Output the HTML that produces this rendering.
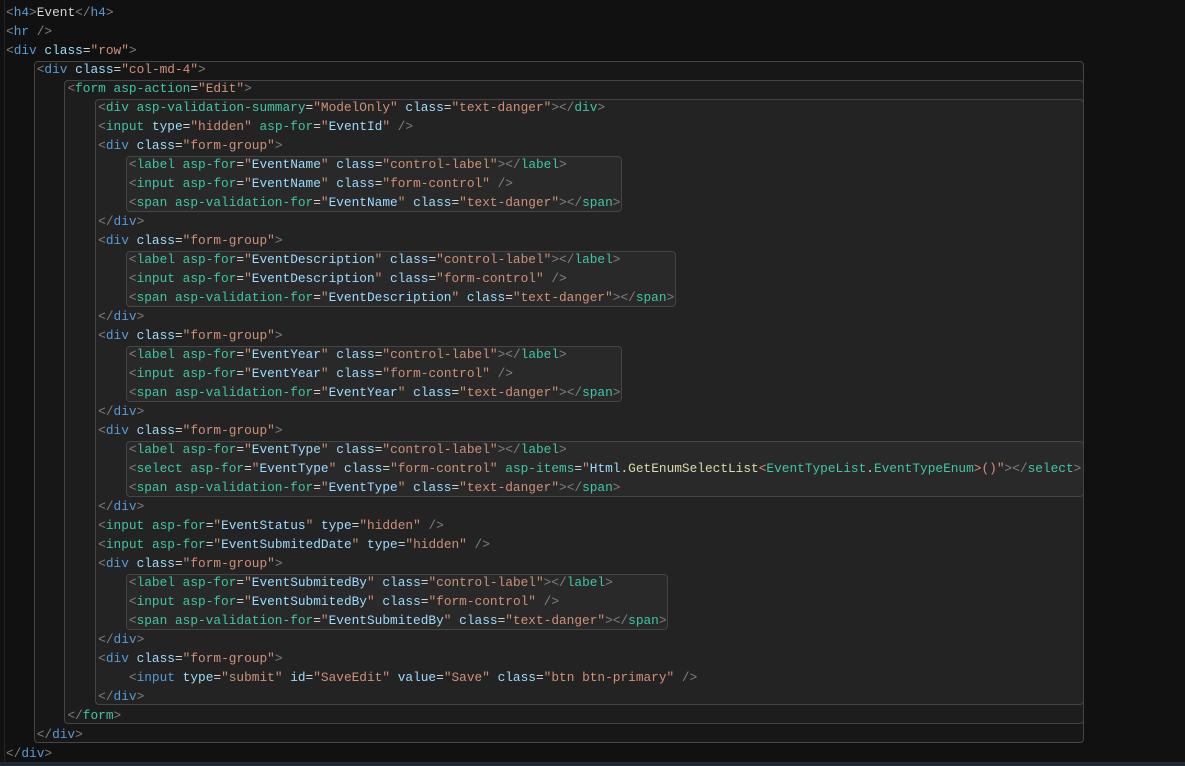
<!DOCTYPE html>
<html><head><meta charset="utf-8"><style>
html,body{margin:0;padding:0;}
body{width:1185px;height:766px;background:#111111;position:relative;overflow:hidden;font-family:"Liberation Mono",monospace;font-size:12.8px;}
.bx{position:absolute;border:1px solid #454545;border-radius:4px;background:rgba(255,255,255,0.028);box-sizing:border-box;}
.l{position:absolute;left:6px;height:19px;line-height:19px;white-space:pre;color:#d4d4d4;margin-top:1px;}
.d{color:#808080}.t{color:#569cd6}.a{color:#9cdcfe}.s{color:#ce9178}.h{color:#3fc6a4}.v{color:#9cdcfe}.f{color:#dcdcaa}
.gut{position:absolute;left:4px;top:0;width:1px;height:762px;background:#252525}
.bot{position:absolute;left:0;top:762px;width:1185px;height:4px;background:#1d2a33}
</style></head><body>
<div class="gut"></div>
<div class="bx" style="left:34px;top:61px;width:1050px;height:682px"></div>
<div class="bx" style="left:64px;top:80px;width:1020px;height:644px"></div>
<div class="bx" style="left:95px;top:99px;width:989px;height:606px"></div>
<div class="bx" style="left:126px;top:156px;width:496px;height:56px"></div>
<div class="bx" style="left:126px;top:251px;width:550px;height:56px"></div>
<div class="bx" style="left:126px;top:346px;width:496px;height:56px"></div>
<div class="bx" style="left:126px;top:441px;width:958px;height:56px"></div>
<div class="bx" style="left:126px;top:574px;width:542px;height:56px"></div>
<div class="bot"></div>

<div class="l" style="top:2px"><span class="d">&lt;</span><span class="t">h4</span><span class="d">&gt;</span>Event<span class="d">&lt;/</span><span class="t">h4</span><span class="d">&gt;</span></div>
<div class="l" style="top:21px"><span class="d">&lt;</span><span class="t">hr</span> <span class="d">/&gt;</span></div>
<div class="l" style="top:40px"><span class="d">&lt;</span><span class="t">div</span> <span class="a">class</span>=<span class="s">"row"</span><span class="d">&gt;</span></div>
<div class="l" style="top:59px">    <span class="d">&lt;</span><span class="t">div</span> <span class="a">class</span>=<span class="s">"col-md-4"</span><span class="d">&gt;</span></div>
<div class="l" style="top:78px">        <span class="d">&lt;</span><span class="h">form</span> <span class="h">asp-action</span>=<span class="s">"Edit"</span><span class="d">&gt;</span></div>
<div class="l" style="top:97px">            <span class="d">&lt;</span><span class="h">div</span> <span class="h">asp-validation-summary</span>=<span class="s">"ModelOnly"</span> <span class="a">class</span>=<span class="s">"text-danger"</span><span class="d">&gt;&lt;/</span><span class="h">div</span><span class="d">&gt;</span></div>
<div class="l" style="top:116px">            <span class="d">&lt;</span><span class="h">input</span> <span class="a">type</span>=<span class="s">"hidden"</span> <span class="h">asp-for</span>=<span class="s">"</span><span class="v">EventId</span><span class="s">"</span> <span class="d">/&gt;</span></div>
<div class="l" style="top:135px">            <span class="d">&lt;</span><span class="t">div</span> <span class="a">class</span>=<span class="s">"form-group"</span><span class="d">&gt;</span></div>
<div class="l" style="top:154px">                <span class="d">&lt;</span><span class="h">label</span> <span class="h">asp-for</span>=<span class="s">"</span><span class="v">EventName</span><span class="s">"</span> <span class="a">class</span>=<span class="s">"control-label"</span><span class="d">&gt;&lt;/</span><span class="h">label</span><span class="d">&gt;</span></div>
<div class="l" style="top:173px">                <span class="d">&lt;</span><span class="h">input</span> <span class="h">asp-for</span>=<span class="s">"</span><span class="v">EventName</span><span class="s">"</span> <span class="a">class</span>=<span class="s">"form-control"</span> <span class="d">/&gt;</span></div>
<div class="l" style="top:192px">                <span class="d">&lt;</span><span class="h">span</span> <span class="h">asp-validation-for</span>=<span class="s">"</span><span class="v">EventName</span><span class="s">"</span> <span class="a">class</span>=<span class="s">"text-danger"</span><span class="d">&gt;&lt;/</span><span class="h">span</span><span class="d">&gt;</span></div>
<div class="l" style="top:211px">            <span class="d">&lt;/</span><span class="t">div</span><span class="d">&gt;</span></div>
<div class="l" style="top:230px">            <span class="d">&lt;</span><span class="t">div</span> <span class="a">class</span>=<span class="s">"form-group"</span><span class="d">&gt;</span></div>
<div class="l" style="top:249px">                <span class="d">&lt;</span><span class="h">label</span> <span class="h">asp-for</span>=<span class="s">"</span><span class="v">EventDescription</span><span class="s">"</span> <span class="a">class</span>=<span class="s">"control-label"</span><span class="d">&gt;&lt;/</span><span class="h">label</span><span class="d">&gt;</span></div>
<div class="l" style="top:268px">                <span class="d">&lt;</span><span class="h">input</span> <span class="h">asp-for</span>=<span class="s">"</span><span class="v">EventDescription</span><span class="s">"</span> <span class="a">class</span>=<span class="s">"form-control"</span> <span class="d">/&gt;</span></div>
<div class="l" style="top:287px">                <span class="d">&lt;</span><span class="h">span</span> <span class="h">asp-validation-for</span>=<span class="s">"</span><span class="v">EventDescription</span><span class="s">"</span> <span class="a">class</span>=<span class="s">"text-danger"</span><span class="d">&gt;&lt;/</span><span class="h">span</span><span class="d">&gt;</span></div>
<div class="l" style="top:306px">            <span class="d">&lt;/</span><span class="t">div</span><span class="d">&gt;</span></div>
<div class="l" style="top:325px">            <span class="d">&lt;</span><span class="t">div</span> <span class="a">class</span>=<span class="s">"form-group"</span><span class="d">&gt;</span></div>
<div class="l" style="top:344px">                <span class="d">&lt;</span><span class="h">label</span> <span class="h">asp-for</span>=<span class="s">"</span><span class="v">EventYear</span><span class="s">"</span> <span class="a">class</span>=<span class="s">"control-label"</span><span class="d">&gt;&lt;/</span><span class="h">label</span><span class="d">&gt;</span></div>
<div class="l" style="top:363px">                <span class="d">&lt;</span><span class="h">input</span> <span class="h">asp-for</span>=<span class="s">"</span><span class="v">EventYear</span><span class="s">"</span> <span class="a">class</span>=<span class="s">"form-control"</span> <span class="d">/&gt;</span></div>
<div class="l" style="top:382px">                <span class="d">&lt;</span><span class="h">span</span> <span class="h">asp-validation-for</span>=<span class="s">"</span><span class="v">EventYear</span><span class="s">"</span> <span class="a">class</span>=<span class="s">"text-danger"</span><span class="d">&gt;&lt;/</span><span class="h">span</span><span class="d">&gt;</span></div>
<div class="l" style="top:401px">            <span class="d">&lt;/</span><span class="t">div</span><span class="d">&gt;</span></div>
<div class="l" style="top:420px">            <span class="d">&lt;</span><span class="t">div</span> <span class="a">class</span>=<span class="s">"form-group"</span><span class="d">&gt;</span></div>
<div class="l" style="top:439px">                <span class="d">&lt;</span><span class="h">label</span> <span class="h">asp-for</span>=<span class="s">"</span><span class="v">EventType</span><span class="s">"</span> <span class="a">class</span>=<span class="s">"control-label"</span><span class="d">&gt;&lt;/</span><span class="h">label</span><span class="d">&gt;</span></div>
<div class="l" style="top:458px">                <span class="d">&lt;</span><span class="h">select</span> <span class="h">asp-for</span>=<span class="s">"</span><span class="v">EventType</span><span class="s">"</span> <span class="a">class</span>=<span class="s">"form-control"</span> <span class="h">asp-items</span>=<span class="s">"</span><span class="v">Html</span>.<span class="f">GetEnumSelectList</span><span class="s">&lt;</span><span class="h">EventTypeList</span>.<span class="h">EventTypeEnum</span><span class="s">&gt;()"</span><span class="d">&gt;&lt;/</span><span class="h">select</span><span class="d">&gt;</span></div>
<div class="l" style="top:477px">                <span class="d">&lt;</span><span class="h">span</span> <span class="h">asp-validation-for</span>=<span class="s">"</span><span class="v">EventType</span><span class="s">"</span> <span class="a">class</span>=<span class="s">"text-danger"</span><span class="d">&gt;&lt;/</span><span class="h">span</span><span class="d">&gt;</span></div>
<div class="l" style="top:496px">            <span class="d">&lt;/</span><span class="t">div</span><span class="d">&gt;</span></div>
<div class="l" style="top:515px">            <span class="d">&lt;</span><span class="h">input</span> <span class="h">asp-for</span>=<span class="s">"</span><span class="v">EventStatus</span><span class="s">"</span> <span class="a">type</span>=<span class="s">"hidden"</span> <span class="d">/&gt;</span></div>
<div class="l" style="top:534px">            <span class="d">&lt;</span><span class="h">input</span> <span class="h">asp-for</span>=<span class="s">"</span><span class="v">EventSubmitedDate</span><span class="s">"</span> <span class="a">type</span>=<span class="s">"hidden"</span> <span class="d">/&gt;</span></div>
<div class="l" style="top:553px">            <span class="d">&lt;</span><span class="t">div</span> <span class="a">class</span>=<span class="s">"form-group"</span><span class="d">&gt;</span></div>
<div class="l" style="top:572px">                <span class="d">&lt;</span><span class="h">label</span> <span class="h">asp-for</span>=<span class="s">"</span><span class="v">EventSubmitedBy</span><span class="s">"</span> <span class="a">class</span>=<span class="s">"control-label"</span><span class="d">&gt;&lt;/</span><span class="h">label</span><span class="d">&gt;</span></div>
<div class="l" style="top:591px">                <span class="d">&lt;</span><span class="h">input</span> <span class="h">asp-for</span>=<span class="s">"</span><span class="v">EventSubmitedBy</span><span class="s">"</span> <span class="a">class</span>=<span class="s">"form-control"</span> <span class="d">/&gt;</span></div>
<div class="l" style="top:610px">                <span class="d">&lt;</span><span class="h">span</span> <span class="h">asp-validation-for</span>=<span class="s">"</span><span class="v">EventSubmitedBy</span><span class="s">"</span> <span class="a">class</span>=<span class="s">"text-danger"</span><span class="d">&gt;&lt;/</span><span class="h">span</span><span class="d">&gt;</span></div>
<div class="l" style="top:629px">            <span class="d">&lt;/</span><span class="t">div</span><span class="d">&gt;</span></div>
<div class="l" style="top:648px">            <span class="d">&lt;</span><span class="t">div</span> <span class="a">class</span>=<span class="s">"form-group"</span><span class="d">&gt;</span></div>
<div class="l" style="top:667px">                <span class="d">&lt;</span><span class="t">input</span> <span class="a">type</span>=<span class="s">"submit"</span> <span class="a">id</span>=<span class="s">"SaveEdit"</span> <span class="a">value</span>=<span class="s">"Save"</span> <span class="a">class</span>=<span class="s">"btn btn-primary"</span> <span class="d">/&gt;</span></div>
<div class="l" style="top:686px">            <span class="d">&lt;/</span><span class="t">div</span><span class="d">&gt;</span></div>
<div class="l" style="top:705px">        <span class="d">&lt;/</span><span class="h">form</span><span class="d">&gt;</span></div>
<div class="l" style="top:724px">    <span class="d">&lt;/</span><span class="t">div</span><span class="d">&gt;</span></div>
<div class="l" style="top:743px"><span class="d">&lt;/</span><span class="t">div</span><span class="d">&gt;</span></div>
</body></html>
